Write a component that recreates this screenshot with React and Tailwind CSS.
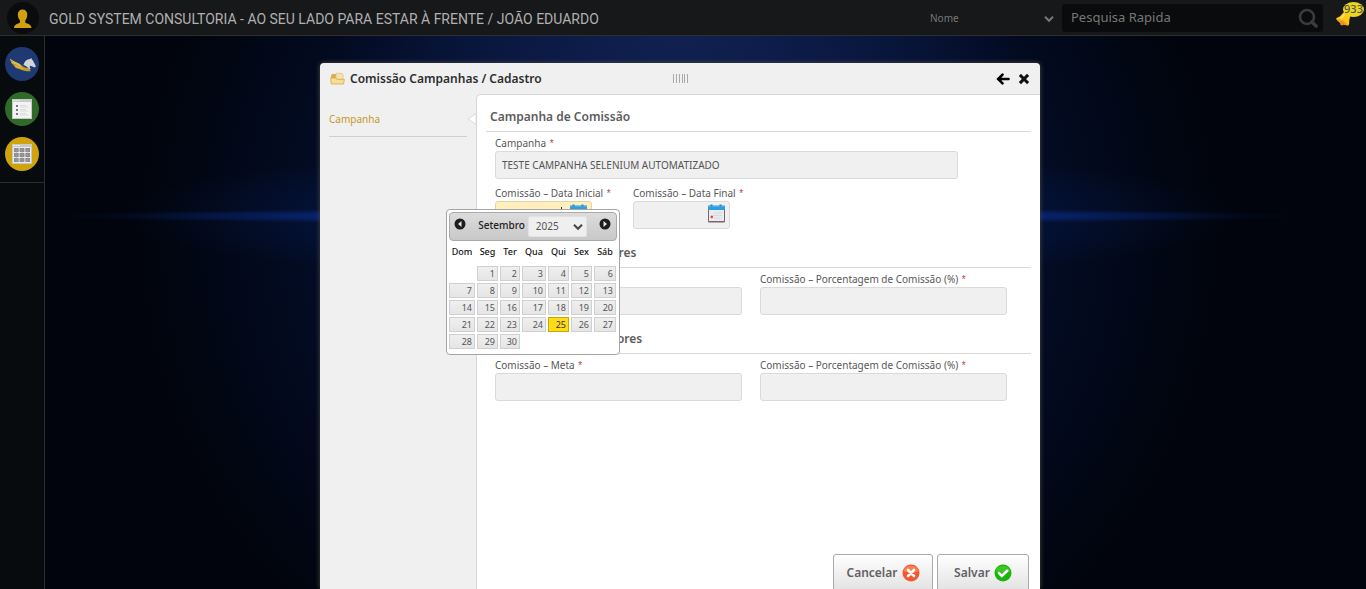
import React from "react";

function UserIcon() {
  return (
    <svg viewBox="0 0 32 32" className="size-8" aria-hidden="true">
      <circle cx="16" cy="16" r="16" fill="#0a0b0c" />
      <path
        d="M15.500 7.500c3 0 4.800 2 4.800 5 0 2.300-.8 4.500-2 5.700v2.300c1.200 1.200 5.900 1.200 6.200 5.500H7c.3-4.300 5-4.300 6-5.500v-2.300c-1.400-1.200-2.200-3.400-2.200-5.700 0-3 1.800-5 4.700-5z"
        fill="#d0a010"
      />
    </svg>
  );
}

function PegasusIcon() {
  return (
    <svg viewBox="0 0 34 34" className="size-[34px]" aria-hidden="true">
      <circle cx="17" cy="17" r="17" fill="#1f3a73" />
      <path d="M5 12c4 2.500 9 3.500 12.500 7 1.800 1.600 4 2.200 7.500 1.500-.3 1.800-.2 2.600.8 3.700-3.800.3-7.300-.2-10.300-1.700-2-.7-4.500-1.200-5.500-2.300l.8-.3c-1.500-.5-2.300-1.200-2.800-2l.7-.1C7 17 6.200 16 5.900 15l.7-.1C5.500 14 5 13 5 12z" fill="#c39a2e" />
      <path d="M5.300 12.500c3 2.500 7 3.500 10 6M7 15.500c3 1 6 2 9 4M10 19.500c3 .3 5 1 8 2.300" stroke="#ecd05c" strokeWidth=".8" fill="none" />
      <path d="M18.500 18c.8-3.500 3-5.600 6.700-6l1.300-1 .4 1.500c1.200.8 1.600 2 2.300 3.500l1.700 3.200-1.300 1.200-2.300-.9-2.100-.7c-.9 1.300-.4 2.300.8 3.400-2.600-.2-3.500-3-7.500-4.200z" fill="#d2d4d8" />
    </svg>
  );
}

function ListIcon() {
  return (
    <svg viewBox="0 0 34 34" className="size-[34px]" aria-hidden="true">
      <circle cx="17" cy="17" r="17" fill="#306a28" />
      <rect x="7" y="7" width="20" height="20" fill="#c9c9c9" />
      <rect x="8" y="10" width="18" height="16" fill="#f3f3f3" />
      <path d="M8 8.500h1.500M10.500 8.500H12M13 8.500h1.500" stroke="#f2f2f2" />
      <path d="M11 13h2v2h-2zM11 17h2v2h-2zM11 21h2v2h-2z" fill="#777" />
      <path d="M15 13.500h6M15 15h8M15 17.500h6M15 19h8M15 21.500h6M15 23h8" stroke="#d5d5d5" strokeWidth=".8" />
    </svg>
  );
}

function GridIcon() {
  return (
    <svg viewBox="0 0 34 34" className="size-[34px]" aria-hidden="true">
      <circle cx="17" cy="17" r="17" fill="#cea30e" />
      <rect x="7" y="7" width="20" height="20" fill="#c9c9c9" />
      <rect x="8" y="10" width="18" height="16" fill="#eaeaea" />
      <path d="M8 8.500h1.500M10.500 8.500H12M13 8.500h1.500" stroke="#f2f2f2" />
      <path d="M9 11h4.600v4H9zM14.700 11h4.600v4h-4.600zM20.400 11H25v4h-4.600zM9 16h4.600v4H9zM14.700 16h4.600v4h-4.600zM20.400 16H25v4h-4.600zM9 21h4.600v4H9zM14.700 21h4.600v4h-4.600zM20.400 21H25v4h-4.600z" fill="#8b8b8b" />
      <path d="M9 13h16M9 18h16M9 23h16M11.300 11v14M17 11v14M22.700 11v14" stroke="#a3a3a3" strokeWidth=".6" />
    </svg>
  );
}

function Chevron({ className }) {
  return (
    <svg viewBox="0 0 10 8" className={className} aria-hidden="true">
      <path d="M1 1.800l4 4 4-4" fill="none" stroke="currentColor" strokeWidth="2" />
    </svg>
  );
}

function SearchIcon() {
  return (
    <svg viewBox="0 0 20 20" className="size-5" aria-hidden="true">
      <circle cx="9" cy="9" r="7" fill="none" stroke="#393c3e" strokeWidth="2.600" />
      <path d="M14 14l4 4" stroke="#393c3e" strokeWidth="3.600" strokeLinecap="round" />
    </svg>
  );
}

function BellIcon() {
  return (
    <svg viewBox="0 0 17 17" className="size-[17px]" aria-hidden="true">
      <path d="M8.500 2.500C10.500.8 14 2 15 4.500c.8 2.300-1 4.500-.8 7.500.1 1.500-.2 3-1 3.600C10 15.500 4.500 13 1.500 9.500c-.5-.8-.2-1.500.6-1.800C5.500 7 6.500 4.500 8.500 2.500z" fill="#ffc814" />
      <path d="M2 9.500c3-1 9 1.500 11 5.500-4 .5-9-2-11-5.500z" fill="#f0a01c" />
      <path d="M9.500 4.500C8 6 7.500 8 5.500 8.700" stroke="#ffe768" strokeWidth="1.400" fill="none" />
      <circle cx="7" cy="13.500" r="1.900" fill="#e5901b" />
    </svg>
  );
}

function FolderIcon() {
  return (
    <svg viewBox="0 0 15 13" className="h-[13px] w-[15px]" aria-hidden="true">
      <path d="M1 3.500L2 2h4l1 1h5.500v8.500H1z" fill="#dcae52" />
      <path d="M6 1.300h6l1 1.500v5H6z" fill="#f3e3ae" stroke="#ddba66" strokeWidth=".6" />
      <path d="M.7 6h4.800L7 7.300h7.300L13.600 12H1.200z" fill="#f8dc98" stroke="#d6a84e" strokeWidth=".8" />
    </svg>
  );
}

function CalendarIcon() {
  return (
    <svg viewBox="0 0 19 19" className="h-[19px] w-[19px]" aria-hidden="true">
      <rect x="1" y="2" width="17" height="16.500" rx="1" fill="#80626a" />
      <rect x="2" y="5" width="15" height="12" fill="#e9ecee" />
      <path d="M1 1.500h17v4.500H1z" fill="#2c9de0" />
      <path d="M1 2h17" stroke="#72c4f2" />
      <path d="M4.500.5v2M13.500.5v2" stroke="#3683b2" strokeWidth="2" />
      <path d="M7 9h8M4 11.500h11M7 14h7" stroke="#ccd2d6" strokeDasharray="1.500 .7" />
      <circle cx="4.800" cy="13" r="1.300" fill="#e44236" />
    </svg>
  );
}

function PageArrow({ left }) {
  return (
    <svg viewBox="0 0 12 12" className="size-3" aria-hidden="true">
      <circle cx="6" cy="6" r="5.500" fill="#1d1d1d" />
      <path d={left ? "M7.500 3v6L4 6z" : "M4.500 3v6L8 6z"} fill="#e6e6e6" />
    </svg>
  );
}

function BackIcon() {
  return (
    <svg viewBox="0 0 14 12" className="h-3 w-3.5" aria-hidden="true">
      <path d="M6.500 1.700L2.200 6l4.300 4.300M2.500 6h10" fill="none" stroke="#000" strokeWidth="2.600" strokeLinecap="round" />
    </svg>
  );
}

function CloseIcon() {
  return (
    <svg viewBox="0 0 12 12" className="size-3" aria-hidden="true">
      <path d="M3 3l6 6M9 3l-6 6" stroke="#111" strokeWidth="3.100" strokeLinecap="square" />
    </svg>
  );
}

function CancelIcon() {
  return (
    <svg viewBox="0 0 18 18" className="size-[18px]" aria-hidden="true">
      <circle cx="9" cy="9" r="8.500" fill="#f4572c" />
      <path d="M1.500 7a8 8 0 0 1 15 0c-4 2-11 2-15 0z" fill="#fb8058" />
      <path d="M6 6l6 6M12 6l-6 6" stroke="#fff" strokeWidth="2.600" strokeLinecap="round" />
    </svg>
  );
}

function SaveIcon() {
  return (
    <svg viewBox="0 0 18 18" className="size-[18px]" aria-hidden="true">
      <circle cx="9" cy="9" r="8.500" fill="#19b50c" />
      <path d="M1.500 7a8 8 0 0 1 15 0c-4 2-11 2-15 0z" fill="#3fc626" />
      <path d="M5 9.200l2.800 2.800 5.400-5.200" fill="none" stroke="#fff" strokeWidth="2.600" strokeLinecap="round" />
    </svg>
  );
}

function SectionTitle({ children }) {
  return (
    <h2 className="border-b border-[#d8d8d8] px-1 pb-1 text-xs leading-5 font-semibold text-[#5c5c5c]">{children}</h2>
  );
}

function Label({ id, children }) {
  return (
    <label htmlFor={id} className="block h-[15px] text-[10px] leading-[15px] whitespace-nowrap text-[#585858]">
      {children} <span className="ml-px font-['Liberation_Sans',sans-serif] text-[#c04040]">*</span>
    </label>
  );
}

const inputBase = "block h-7 w-full rounded-[3px] border border-[#dadada] bg-[#f0f0f0] px-1.5 text-[10px] text-[#555] outline-none";

function Field({ id, label, value }) {
  return (
    <div>
      <Label id={id}>{label}</Label>
      <input id={id} type="text" defaultValue={value} className={inputBase} />
    </div>
  );
}

function DateField({ id, label, active, children }) {
  return (
    <div className="w-[120px]">
      <Label id={id}>{label}</Label>
      <div className="relative w-[97px]">
        <input
          id={id}
          type="text"
          className={
            active
              ? "block h-7 w-full rounded-[3px] border border-[#e3d3a3] bg-[#ffefbf] px-1.5 text-[10px] outline-none"
              : inputBase
          }
        />
        {active && <span className="absolute top-1.5 left-[66px] h-3 w-px bg-[#333]" />}
        <button type="button" aria-label="Abrir calendário" className="absolute top-[3px] right-1">
          <CalendarIcon />
        </button>
        {children}
      </div>
    </div>
  );
}

const weekdays = ["Dom", "Seg", "Ter", "Qua", "Qui", "Sex", "Sáb"];
const weeks = [
  [null, 1, 2, 3, 4, 5, 6],
  [7, 8, 9, 10, 11, 12, 13],
  [14, 15, 16, 17, 18, 19, 20],
  [21, 22, 23, 24, 25, 26, 27],
  [28, 29, 30, null, null, null, null],
];

function DatePicker() {
  return (
    <div className="absolute top-2 -left-[49px] z-10 w-[174px] rounded-[4px] border border-[#a5a5a5] bg-white px-0.5 pt-0.5 pb-1">
      <div className="flex h-[29px] items-center rounded-[4px] border border-[#aaa] bg-linear-to-b from-[#dcdcdc] to-[#c8c8c8] pr-[5px] pl-1">
        <button type="button" aria-label="Anterior" className="mb-1.5">
          <PageArrow left />
        </button>
        <span className="ml-auto pb-0.5 text-[10px] font-medium text-[#222]">Setembro</span>
        <div className="relative ml-[3px] h-[21px] w-[59px]">
          <select
            aria-label="Ano"
            defaultValue="2025"
            className="block size-full appearance-none rounded-[2px] border border-[#e2e2e2] bg-[#efefef] pl-[7px] text-[10px] text-[#555] outline-none"
          >
            <option>2024</option>
            <option>2025</option>
            <option>2026</option>
          </select>
          <Chevron className="pointer-events-none absolute top-[7px] right-1 h-2 w-2.5 text-[#444]" />
        </div>
        <button type="button" aria-label="Próximo" className="mb-1.5 ml-auto">
          <PageArrow />
        </button>
      </div>
      <table className="-ml-px w-[169px] table-fixed border-collapse">
        <colgroup>
          <col className="w-[28px]" />
          <col className="w-[23px]" />
          <col className="w-[22px]" />
          <col className="w-[26px]" />
          <col className="w-[23px]" />
          <col className="w-[23px]" />
          <col className="w-[24px]" />
        </colgroup>
        <thead>
          <tr>
            {weekdays.map((d) => (
              <th key={d} className="h-6 p-0 pb-0.5 text-[9px] leading-3 font-medium text-[#111]">
                {d}
              </th>
            ))}
          </tr>
        </thead>
        <tbody>
          {weeks.map((week, i) => (
            <tr key={i}>
              {week.map((day, j) => (
                <td key={j} className="h-[17px] p-px">
                  {day && (
                    <a
                      href="#"
                      className={
                        day === 25
                          ? "block h-[15px] border border-[#c8a800] bg-[#ffdb1a] pr-0.5 text-right text-[9px] leading-[13px] text-[#333]"
                          : "block h-[15px] border border-[#d0d0d0] bg-linear-to-b from-[#efefef] to-[#e5e5e5] pr-0.5 text-right text-[9px] leading-[13px] text-[#555]"
                      }
                    >
                      {day}
                    </a>
                  )}
                </td>
              ))}
            </tr>
          ))}
        </tbody>
      </table>
    </div>
  );
}

function TopBar() {
  return (
    <header className="flex h-9 shrink-0 items-center border-b border-[#2b2d2f] bg-[#17181a] pr-1 pl-[7px]">
      <UserIcon />
      <h1 className="ml-[10px] pt-0.5 font-[Roboto,'Noto_Sans',sans-serif] text-[14px] leading-5 text-[#b0b0b0]">
        GOLD SYSTEM CONSULTORIA - AO SEU LADO PARA ESTAR À FRENTE / JOÃO EDUARDO
      </h1>
      <div className="relative ml-auto w-[124px]">
        <select aria-label="Campo de busca" className="block h-5 w-full appearance-none bg-transparent pt-0.5 text-[10px] text-[#777] outline-none">
          <option>Nome</option>
        </select>
        <Chevron className="pointer-events-none absolute top-[7px] right-0 h-2 w-2.5 text-[#777]" />
      </div>
      <div className="ml-2 flex h-7 w-[261px] items-center rounded-[3px] bg-[#0a0b0c] px-[5px]">
        <input
          type="text"
          aria-label="Pesquisa Rapida"
          placeholder="Pesquisa Rapida"
          className="min-w-0 flex-1 bg-transparent px-1 text-[13px] outline-none placeholder:text-[#777]"
        />
        <button type="button" aria-label="Pesquisar">
          <SearchIcon />
        </button>
      </div>
      <button type="button" aria-label="Notificações" className="relative ml-3 h-8 w-[27px]">
        <span className="absolute bottom-[7px] left-0">
          <BellIcon />
        </span>
        <span className="absolute top-0 -right-0.5 flex h-[15px] w-[21px] items-center justify-center rounded-[50%] bg-[#ecd51f] text-[11px] font-medium text-[#555]">
          933
        </span>
      </button>
    </header>
  );
}

function SideBar() {
  return (
    <nav className="w-[45px] shrink-0 border-r border-[#2b2d2f] bg-[#070b0d]">
      <div className="flex flex-col items-center gap-[11px] border-b border-[#2b2d2f] pt-[11px] pb-[11px]">
        <button type="button" aria-label="Gold System">
          <PegasusIcon />
        </button>
        <button type="button" aria-label="Cadastros">
          <ListIcon />
        </button>
        <button type="button" aria-label="Tabelas">
          <GridIcon />
        </button>
      </div>
    </nav>
  );
}

const actionClass =
  "flex h-[38px] items-center justify-center gap-1 rounded-t-[3px] border border-[#aaa] bg-linear-to-b from-white to-[#e2e2e2] text-xs font-semibold text-[#616161]";

function CampaignWindow() {
  return (
    <section className="flex min-w-0 flex-1 flex-col rounded-t-[4px] bg-[#f0f0f0] shadow-[0_0_5px_#4b4b40]">
      <div className="flex h-[31px] shrink-0 items-center px-2.5">
        <div className="flex flex-1 items-center gap-[5px]">
          <FolderIcon />
          <span className="text-xs font-semibold whitespace-nowrap text-[#2e2e2e]">Comissão Campanhas / Cadastro</span>
        </div>
        <svg viewBox="0 0 15 9" className="h-[9px] w-[15px]" aria-hidden="true">
          <path d="M.5 0v9M3.500 0v9M6.500 0v9M9.500 0v9M11.500 0v9M14.500 0v9" stroke="#aaa" />
        </svg>
        <div className="flex flex-1 items-center justify-end gap-2">
          <button type="button" aria-label="Voltar">
            <BackIcon />
          </button>
          <button type="button" aria-label="Fechar">
            <CloseIcon />
          </button>
        </div>
      </div>
      <div className="flex min-h-0 flex-1">
        <aside className="flex w-[156px] shrink-0 items-start pt-4 pl-[9px]">
          <a href="#" className="flex h-[27px] w-[138px] border-b border-[#cfcfcf] pt-0.5 text-[10px] leading-[15px] text-[#c49a27]">
            Campanha
          </a>
          <svg viewBox="0 0 9 12" className="mt-[3px] h-3 w-[9px]" aria-hidden="true">
            <path d="M9 .5L1 6l8 5.500z" fill="#fff" stroke="#d9d9d9" />
          </svg>
        </aside>
        <form className="flex min-w-0 flex-1 flex-col rounded-tl-[5px] border-t border-l border-[#d6d6d6] bg-white pt-3 pr-[9px] pl-[9px]">
          <SectionTitle>Campanha de Comissão</SectionTitle>
          <div className="flex flex-col gap-[7px] pt-1 pr-6 pl-[9px]">
            <div className="max-w-[463px]">
              <Field id="campanha" label="Campanha" value="TESTE CAMPANHA SELENIUM AUTOMATIZADO" />
            </div>
            <div className="flex gap-[18px]">
              <DateField id="inicial" label="Comissão – Data Inicial" active>
                <DatePicker />
              </DateField>
              <DateField id="final" label="Comissão – Data Final" />
            </div>
          </div>
          <div className="mt-3.5">
            <SectionTitle>Comissão de Vendedores</SectionTitle>
            <div className="grid grid-cols-2 gap-[18px] pt-1 pr-6 pl-[9px]">
              <Field id="meta-v" label="Comissão – Meta" />
              <Field id="porc-v" label="Comissão – Porcentagem de Comissão (%)" />
            </div>
          </div>
          <div className="mt-3.5">
            <SectionTitle>Comissão de Supervisores</SectionTitle>
            <div className="grid grid-cols-2 gap-[18px] pt-1 pr-6 pl-[9px]">
              <Field id="meta-s" label="Comissão – Meta" />
              <Field id="porc-s" label="Comissão – Porcentagem de Comissão (%)" />
            </div>
          </div>
          <div className="mt-auto flex h-[35px] shrink-0 items-start justify-end gap-1 pr-0.5">
            <button type="button" className={actionClass + " w-[100px]"}>
              Cancelar <CancelIcon />
            </button>
            <button type="button" className={actionClass + " w-[92px]"}>
              Salvar <SaveIcon />
            </button>
          </div>
        </form>
      </div>
    </section>
  );
}

export default function App() {
  return (
    <div className="flex h-screen flex-col overflow-hidden bg-[#01040c] font-['Noto_Sans',sans-serif]">
      <TopBar />
      <div className="flex min-h-0 flex-1">
        <SideBar />
        <main className="flex min-w-0 flex-1 bg-[radial-gradient(ellipse_620px_8px_at_48%_180px,#0e3ab8,transparent),radial-gradient(ellipse_560px_70px_at_48%_179px,#08267099,transparent),radial-gradient(ellipse_340px_180px_at_48%_0px,#142454cc,transparent),radial-gradient(ellipse_540px_520px_at_48%_200px,#071c58,#01040c)] pt-[27px] pr-[326px] pl-[275px]">
          <CampaignWindow />
        </main>
      </div>
    </div>
  );
}
